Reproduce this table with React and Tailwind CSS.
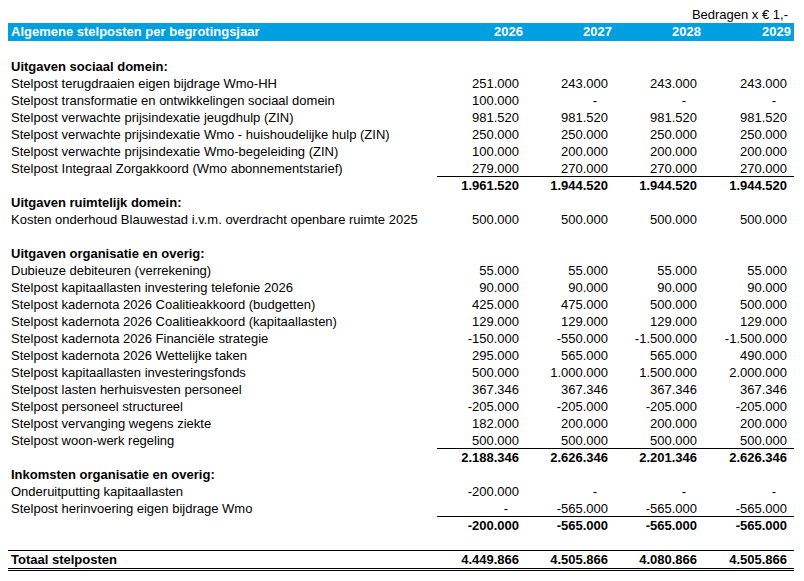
import React from "react";

const years = ["2026", "2027", "2028", "2029"];

const rows = [
  { type: "blank" },
  { type: "head", label: "Uitgaven sociaal domein:" },
  { label: "Stelpost terugdraaien eigen bijdrage Wmo-HH", v: ["251.000", "243.000", "243.000", "243.000"] },
  { label: "Stelpost transformatie en ontwikkelingen sociaal domein", v: ["100.000", "-", "-", "-"] },
  { label: "Stelpost verwachte prijsindexatie jeugdhulp (ZIN)", v: ["981.520", "981.520", "981.520", "981.520"] },
  { label: "Stelpost verwachte prijsindexatie Wmo - huishoudelijke hulp (ZIN)", v: ["250.000", "250.000", "250.000", "250.000"] },
  { label: "Stelpost verwachte prijsindexatie Wmo-begeleiding (ZIN)", v: ["100.000", "200.000", "200.000", "200.000"] },
  { label: "Stelpost Integraal Zorgakkoord (Wmo abonnementstarief)", v: ["279.000", "270.000", "270.000", "270.000"], line: true },
  { type: "total", v: ["1.961.520", "1.944.520", "1.944.520", "1.944.520"] },
  { type: "head", label: "Uitgaven ruimtelijk domein:" },
  { label: "Kosten onderhoud Blauwestad i.v.m. overdracht openbare ruimte 2025", v: ["500.000", "500.000", "500.000", "500.000"] },
  { type: "blank" },
  { type: "head", label: "Uitgaven organisatie en overig:" },
  { label: "Dubieuze debiteuren (verrekening)", v: ["55.000", "55.000", "55.000", "55.000"] },
  { label: "Stelpost kapitaallasten investering telefonie 2026", v: ["90.000", "90.000", "90.000", "90.000"] },
  { label: "Stelpost kadernota 2026 Coalitieakkoord (budgetten)", v: ["425.000", "475.000", "500.000", "500.000"] },
  { label: "Stelpost kadernota 2026 Coalitieakkoord (kapitaallasten)", v: ["129.000", "129.000", "129.000", "129.000"] },
  { label: "Stelpost kadernota 2026 Financiële strategie", v: ["-150.000", "-550.000", "-1.500.000", "-1.500.000"] },
  { label: "Stelpost kadernota 2026 Wettelijke taken", v: ["295.000", "565.000", "565.000", "490.000"] },
  { label: "Stelpost kapitaallasten investeringsfonds", v: ["500.000", "1.000.000", "1.500.000", "2.000.000"] },
  { label: "Stelpost lasten herhuisvesten personeel", v: ["367.346", "367.346", "367.346", "367.346"] },
  { label: "Stelpost personeel structureel", v: ["-205.000", "-205.000", "-205.000", "-205.000"] },
  { label: "Stelpost vervanging wegens ziekte", v: ["182.000", "200.000", "200.000", "200.000"] },
  { label: "Stelpost woon-werk regeling", v: ["500.000", "500.000", "500.000", "500.000"], line: true },
  { type: "total", v: ["2.188.346", "2.626.346", "2.201.346", "2.626.346"] },
  { type: "head", label: "Inkomsten organisatie en overig:" },
  { label: "Onderuitputting kapitaallasten", v: ["-200.000", "-", "-", "-"] },
  { label: "Stelpost herinvoering eigen bijdrage Wmo", v: ["-", "-565.000", "-565.000", "-565.000"], line: true },
  { type: "total", v: ["-200.000", "-565.000", "-565.000", "-565.000"] },
];

const grid = "grid w-[786px] grid-cols-[429px_89px_89px_89px_90px]";

function Num({ value, bold, line }) {
  return (
    <div
      className={
        "h-[17px] text-right pr-[7px] leading-[17px] box-border " +
        (bold ? "font-bold " : "") +
        (line ? "border-b border-black" : "")
      }
    >
      {value === "-" ? <span className="mr-[11px]">-</span> : value}
    </div>
  );
}

export default function App() {
  return (
    <div
      className="w-[804px] h-[581px] bg-white text-black text-[13px] pt-[6px] pl-[8px]"
      style={{ fontFamily: '"Liberation Sans", Arial, sans-serif' }}
    >
      <div className={grid + " h-[17px] leading-[17px]"}>
        <div className="col-span-3" />
        <div className="col-span-2 text-right pr-[6px] whitespace-nowrap">Bedragen x € 1,-</div>
      </div>

      <div className={grid + " h-[18px] leading-[18px] bg-[#009fdf] text-white font-bold"}>
        <div className="pl-[3px]">Algemene stelposten per begrotingsjaar</div>
        {years.map((y) => (
          <div key={y} className="text-right pr-[3px]">{y}</div>
        ))}
      </div>

      {rows.map((r, i) => {
        if (r.type === "blank") return <div key={i} className="h-[17px]" />;
        if (r.type === "head")
          return (
            <div key={i} className={grid + " h-[17px] leading-[17px] font-bold"}>
              <div className="pl-[3px] whitespace-nowrap">{r.label}</div>
            </div>
          );
        return (
          <div key={i} className={grid + " h-[17px] leading-[17px]"}>
            <div className="pl-[3px] whitespace-nowrap">{r.label || ""}</div>
            {r.v.map((v, j) => (
              <Num key={j} value={v} bold={r.type === "total"} line={r.line} />
            ))}
          </div>
        );
      })}

      <div className="h-[16px]" />
      <div className={grid + " h-[21px] box-border leading-[17px] font-bold border-t border-b-[3px] border-double border-black"}>
        <div className="pl-[3px]">Totaal stelposten</div>
        {["4.449.866", "4.505.866", "4.080.866", "4.505.866"].map((v, j) => (
          <div key={j} className="text-right pr-[7px]">{v}</div>
        ))}
      </div>
    </div>
  );
}
